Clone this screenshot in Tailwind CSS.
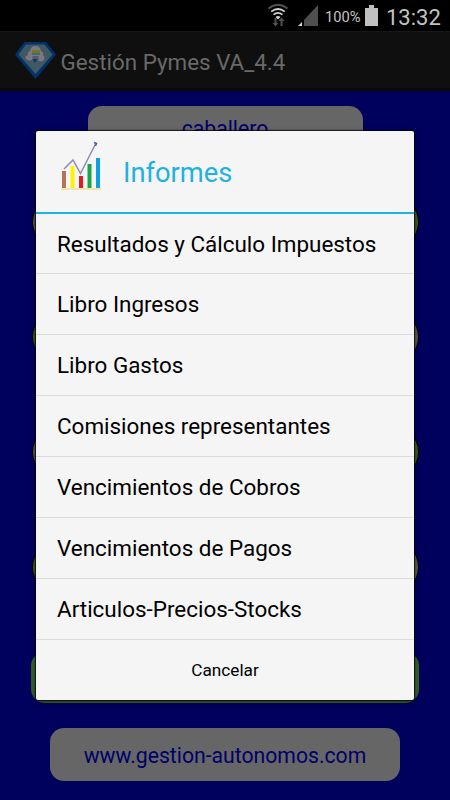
<!DOCTYPE html>
<html lang="es">
<head>
    <meta charset="UTF-8">
    <meta name="viewport" content="width=device-width, initial-scale=1.0">
    <title>Gestión Pymes</title>
    <script src="https://cdn.jsdelivr.net/npm/@tailwindcss/browser@4"></script>
</head>
<body class="relative w-[450px] h-[800px] overflow-hidden bg-[#00005d] font-['Roboto',sans-serif] flex flex-col">
    <!-- Status bar -->
    <div class="h-[31px] shrink-0 bg-black flex items-start justify-end pr-[9px] text-[#c3c3c3]">
        <svg class="w-[22px] h-[24px] mt-[3px]" viewBox="0 0 22 24" fill="none" stroke-width="1.7">
            <path d="M1.5 5.5Q11 -2 20.500 5.500" stroke="#505050"/>
            <path d="M4.200 8.700Q11 3.300 17.800 8.700M6.500 11.600Q11 8 15.500 11.600" stroke="#d0d0d0"/>
            <path d="M8.500 14Q11 12.200 13.500 14L11 16.500z" fill="#d0d0d0"/>
            <path d="M7.500 15v5h-2l3 3.500 3-3.500h-2v-5zM13.500 23v-5h-2l3-3.500 3 3.500h-2v5z" fill="#505050"/>
        </svg>
        <svg class="w-[20px] h-[21px] mt-[5px] ml-[9px]" viewBox="0 0 20 21">
            <path d="M20 0V21H6V15z" fill="#4f4f4f"/>
            <path d="M4 17V21H0z" fill="#d5d5d5"/>
        </svg>
        <span class="ml-[7px] mt-[6px] text-[14.700px] leading-[22px] w-[36px] whitespace-nowrap">100%</span>
        <svg class="w-[13px] h-[21px] mt-[5px] ml-[4px]" viewBox="0 0 13 21">
            <path d="M4 0H9V3H13V21H0V3H4z" fill="#c0c0c0"/>
        </svg>
        <span class="ml-[8px] mt-[3px] text-[22px] leading-[29px] w-[55px] whitespace-nowrap">13:32</span>
    </div>

    <!-- Action bar -->
    <header class="h-[60px] shrink-0 bg-[#0f0f0f] border-t border-[#181818] border-b-[3px] border-b-[#0a0a0a] flex items-center pl-[15px]">
        <svg class="w-[41px] h-[37px] mt-[1px]" viewBox="0 0 41 37">
            <path d="M9.500 0H31L41 12.500 20.500 37 0 12.500z" fill="#02316d"/>
            <path d="M11 2.500H29.500L37.500 12.500 20.500 32 3.500 12.500z" fill="#3f5963"/>
            <path d="M11 17Q9 14 13 13Q12 10 15 9Q16 4 20.500 4Q25 4 26 9Q29 10 28 13Q31 16 28 19Q23 20 22 17H18Q15 20 11 17z" fill="#7b7785"/>
            <path d="M17 8H25V11H17z" fill="#80721d"/>
            <path d="M17 11H25V13H17z" fill="#287770"/>
            <path d="M17.500 14H23.500V18H17.500z" fill="#59566d"/>
            <path d="M17.500 17H22.500L20 21z" fill="#123567"/>
        </svg>
        <h1 class="ml-[4.500px] mt-[4px] text-[22.400px] leading-[30px] text-[#696969] whitespace-nowrap">Gestión Pymes VA_4.4</h1>
    </header>

    <!-- Main screen -->
    <main class="flex flex-col items-center pt-[15px]">
        <div class="w-[275px] h-[46px] rounded-[14px] bg-[#666] text-[#00006a] text-[21.200px] leading-[46px] text-center">caballero</div>
        <div class="w-[387px] mt-[43px] flex flex-col gap-[61px]">
            <div class="flex justify-between">
                <div class="w-[150px] h-[54px] rounded-full bg-[#59594a] border border-black"></div>
                <div class="w-[150px] h-[54px] rounded-full bg-[#3d5a20] border border-black"></div>
            </div>
            <div class="flex justify-between">
                <div class="w-[150px] h-[54px] rounded-full bg-[#3d5a20] border border-black"></div>
                <div class="w-[150px] h-[54px] rounded-full bg-[#59594a] border border-black"></div>
            </div>
            <div class="flex justify-between">
                <div class="w-[150px] h-[54px] rounded-full bg-[#59594a] border border-black"></div>
                <div class="w-[150px] h-[54px] rounded-full bg-[#3d5a20] border border-black"></div>
            </div>
            <div class="flex justify-between">
                <div class="w-[150px] h-[54px] rounded-full bg-[#4d5a20] border border-black"></div>
                <div class="w-[150px] h-[54px] rounded-full bg-[#59594a] border border-black"></div>
            </div>
        </div>
        <div class="w-[388px] h-[51px] mt-[58px] rounded-[14px] bg-[#35602a]"></div>
        <a href="#" class="w-[350px] h-[53px] mt-[25px] rounded-[14px] bg-[#666] text-[#00006a] text-[21.200px] leading-[55px] text-center">www.gestion-autonomos.com</a>
    </main>

    <!-- Dialog -->
    <div class="absolute left-[36px] top-[131px] w-[378px] h-[568.500px] rounded-[2px] bg-[#f5f5f5] shadow-[0_0_1px_1px_rgba(0,0,0,0.75),0_2px_6px_rgba(0,0,0,0.4)] text-black">
        <div class="h-[82.600px] border-b-[2.500px] border-[#1fb1e2] flex items-center">
            <svg class="w-[42px] h-[50px] ml-[25px] mb-[13px]" viewBox="0 0 42 50">
                <path d="M0 49H40" stroke="#f3dc9c" stroke-width="1.500"/>
                <path d="M1 31H5V48H1z" fill="#b27556"/>
                <path d="M9.500 26H13.500V48H9.500z" fill="#fff200"/>
                <path d="M18 36H22V48H18z" fill="#e31b23"/>
                <path d="M26.500 24H30.500V48H26.500z" fill="#18a54a"/>
                <path d="M35 18H39V48H35z" fill="#0ba0df"/>
                <path d="M3 29L12 20 19.500 33.500 34.500 4" fill="none" stroke="#8c8bb0" stroke-width="1.500"/>
                <path d="M33 2.500L35.500 3.500 34.500 6" fill="none" stroke="#5454a0" stroke-width="1.500"/>
            </svg>
            <h2 class="ml-[20px] mt-[3px] text-[27.300px] leading-[36px] text-[#1fb1e2]">Informes</h2>
        </div>
        <ul class="text-[22.450px] leading-[61px]">
            <li class="h-[60.900px] pl-[21px] border-b border-[#dcdcdc]">Resultados y Cálculo Impuestos</li>
            <li class="h-[60.900px] pl-[21px] border-b border-[#dcdcdc]">Libro Ingresos</li>
            <li class="h-[60.900px] pl-[21px] border-b border-[#dcdcdc]">Libro Gastos</li>
            <li class="h-[60.900px] pl-[21px] border-b border-[#dcdcdc]">Comisiones representantes</li>
            <li class="h-[60.900px] pl-[21px] border-b border-[#dcdcdc]">Vencimientos de Cobros</li>
            <li class="h-[60.900px] pl-[21px] border-b border-[#dcdcdc]">Vencimientos de Pagos</li>
            <li class="h-[60.900px] pl-[21px] border-b border-[#dcdcdc]">Articulos-Precios-Stocks</li>
        </ul>
        <button class="block w-full h-[59px] text-[17.200px] leading-[61px] text-center">Cancelar</button>
    </div>
</body>
</html>
